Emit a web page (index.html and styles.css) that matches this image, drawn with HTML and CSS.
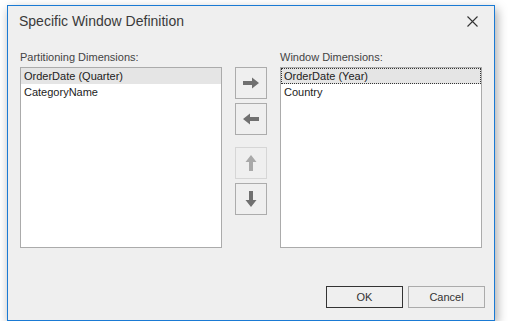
FILE: index.html
```html
<!doctype html>
<html lang="en">
<head>
    <meta charset="UTF-8">
    <title>Specific Window Definition</title>
    <link rel="stylesheet" href="styles.css">
</head>
<body>
<div class="window">
    <div class="titlebar">
        <span class="title">Specific Window Definition</span>
        <span class="close">
            <svg width="11" height="11" viewBox="0 0 11 11">
                <path d="M0.5 0.5 L10.5 10.5 M10.5 0.5 L0.5 10.5" stroke="#333" stroke-width="1.1" fill="none"/>
            </svg>
        </span>
    </div>
    <div class="content">
        <div class="column">
            <label>Partitioning Dimensions:</label>
            <div class="list">
                <div class="item selected">OrderDate (Quarter)</div>
                <div class="item">CategoryName</div>
            </div>
        </div>
        <div class="buttons">
            <button class="arrow">
                <svg width="16" height="16" viewBox="0 0 16 16">
                    <path d="M0 6 H9 V2.5 L16 8 L9 13.5 V10 H0 Z" fill="#707070"/>
                </svg>
            </button>
            <button class="arrow">
                <svg width="16" height="16" viewBox="0 0 16 16">
                    <path d="M16 6 H7 V2.5 L0 8 L7 13.5 V10 H16 Z" fill="#707070"/>
                </svg>
            </button>
            <button class="arrow disabled spaced">
                <svg width="16" height="16" viewBox="0 0 16 16">
                    <path d="M6 16 V7 H2.5 L8 0 L13.5 7 H10 V16 Z" fill="#a9a9a9"/>
                </svg>
            </button>
            <button class="arrow">
                <svg width="16" height="16" viewBox="0 0 16 16">
                    <path d="M6 0 V9 H2.5 L8 16 L13.5 9 H10 V0 Z" fill="#707070"/>
                </svg>
            </button>
        </div>
        <div class="column">
            <label>Window Dimensions:</label>
            <div class="list">
                <div class="item selected focused">OrderDate (Year)</div>
                <div class="item">Country</div>
            </div>
        </div>
    </div>
    <div class="footer">
        <button class="btn default">OK</button>
        <button class="btn">Cancel</button>
    </div>
</div>
</body>
</html>
```

FILE: styles.css
```css
* {
    box-sizing: border-box;
}

body {
    margin: 0;
    background: #fff;
    font-family: "Liberation Sans", Arial, sans-serif;
}

.window {
    margin: 5px 0 0 7px;
    width: 488px;
    height: 316px;
    background: #efefef;
    border: 1px solid #1a7ad4;
    box-shadow: 2px 4px 10px rgba(0, 0, 0, 0.35);
    display: flex;
    flex-direction: column;
}

.titlebar {
    height: 30px;
    display: flex;
    align-items: center;
    justify-content: space-between;
    padding: 0 16px 0 11px;
}

.title {
    font-size: 14px;
    color: #3a3a3a;
}

.close {
    display: flex;
    padding-top: 1px;
}

.content {
    display: flex;
    gap: 13px;
    padding: 13px 12px 0 12px;
}

.column {
    display: flex;
    flex-direction: column;
    width: 202px;
}

label {
    font-size: 11px;
    line-height: 16px;
    color: #444;
    margin-bottom: 2px;
}

.list {
    height: 181px;
    background: #fff;
    border: 1px solid #ababab;
}

.item {
    height: 16px;
    line-height: 16px;
    font-size: 11px;
    color: #222;
    padding-left: 3px;
}

.selected {
    background: #e5e5e5;
}

.focused {
    outline: 1px dotted #333;
    outline-offset: -1px;
}

.buttons {
    display: flex;
    flex-direction: column;
    gap: 4px;
    padding-top: 18px;
}

.arrow {
    width: 32px;
    height: 32px;
    padding: 0;
    border: 1px solid #acacac;
    background: #efefef;
    display: flex;
    align-items: center;
    justify-content: center;
}

.disabled {
    border-color: #d6d6d6;
}

.spaced {
    margin-top: 8px;
}

.footer {
    margin-top: auto;
    display: flex;
    justify-content: flex-end;
    gap: 5px;
    padding: 0 9px 12px 0;
}

.btn {
    width: 77px;
    height: 22px;
    font-family: "Liberation Sans", Arial, sans-serif;
    font-size: 11px;
    color: #333;
    background: #efefef;
    border: 1px solid #ababab;
}

.default {
    border-color: #333;
}
```
